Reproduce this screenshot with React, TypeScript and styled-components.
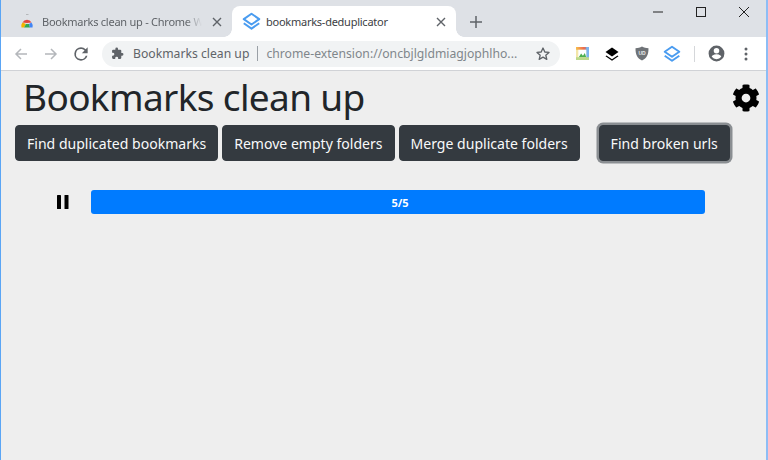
import React from 'react'
import styled, { createGlobalStyle } from 'styled-components'

const GlobalStyle = createGlobalStyle`
  html, body {
    margin: 0;
    padding: 0;
    height: 100%;
    overflow: hidden;
    background: #eeeeee;
  }
  * {
    box-sizing: border-box;
  }
`

const Window = styled.div`
  width: 768px;
  height: 460px;
  display: flex;
  flex-direction: column;
  overflow: hidden;
  border-left: 1px solid #5aa5f5;
  border-right: 2px solid #8dbdf5;
  background: #eeeeee;
  font-family: 'Noto Sans', 'Open Sans', sans-serif;
`

const TabStrip = styled.div`
  height: 37px;
  flex: none;
  display: flex;
  align-items: flex-end;
  padding-left: 7px;
  background: #dee1e6;
`

const Tab = styled.div<{ $active?: boolean }>`
  position: relative;
  width: 224px;
  height: 31px;
  flex: none;
  display: flex;
  align-items: center;
  gap: 7px;
  padding: 0 10px 0 11px;
  border-radius: 8px 8px 0 0;
  background: ${(p) => (p.$active ? '#ffffff' : 'transparent')};
  font-size: 11px;
  letter-spacing: -0.25px;
  color: ${(p) => (p.$active ? '#3c4043' : '#5f6368')};

  ${(p) =>
    p.$active &&
    `
    &::before,
    &::after {
      content: '';
      position: absolute;
      bottom: 0;
      width: 8px;
      height: 8px;
    }
    &::before {
      left: -8px;
      background: radial-gradient(circle at 0 0, transparent 7.5px, #ffffff 8px);
    }
    &::after {
      right: -8px;
      background: radial-gradient(circle at 100% 0, transparent 7.5px, #ffffff 8px);
    }
  `}
`

const TabIcon = styled.span`
  width: 16px;
  height: 16px;
  flex: none;
  display: flex;
  align-items: center;
  justify-content: center;
`

const TabTitle = styled.span<{ $faded?: boolean }>`
  flex: 1;
  min-width: 0;
  white-space: nowrap;
  ${(p) =>
    p.$faded &&
    `
    -webkit-mask-image: linear-gradient(90deg, #000 88%, transparent 98%);
    mask-image: linear-gradient(90deg, #000 88%, transparent 98%);
  `}
`

const NewTab = styled.div`
  width: 40px;
  height: 31px;
  flex: none;
  display: flex;
  align-items: center;
  justify-content: center;
  color: #5f6368;
`

const WindowControls = styled.div`
  margin-left: auto;
  align-self: flex-start;
  display: flex;
  height: 24px;
  padding-right: 1px;
`

const WindowButton = styled.div`
  width: 43px;
  display: flex;
  align-items: center;
  justify-content: center;
`

const Toolbar = styled.div`
  height: 34px;
  flex: none;
  display: flex;
  align-items: center;
  padding: 0 0 0 5px;
  background: #ffffff;
  border-bottom: 1px solid #d0d2d6;
`

const NavButton = styled.div`
  width: 30px;
  height: 24px;
  display: flex;
  align-items: center;
  justify-content: center;
  flex: none;
`

const Omnibox = styled.div`
  width: 458px;
  height: 26px;
  margin-left: 6px;
  flex: none;
  display: flex;
  align-items: center;
  padding: 0 9px 0 9px;
  border-radius: 13px;
  background: #f1f3f4;
  font-size: 12.2px;
  white-space: nowrap;
  color: #5f6368;
`

const OmniName = styled.span`
  margin-left: 9px;
  color: #5f6368;
`

const OmniDivider = styled.span`
  width: 1px;
  height: 15px;
  margin: 0 8px;
  background: #9aa0a6;
`

const OmniUrl = styled.span`
  flex: 1;
  color: #80868b;
`

const Extensions = styled.div`
  flex: 1;
  display: flex;
  align-items: center;
  gap: 10px;
  padding-left: 12px;
`

const ExtensionSlot = styled.div`
  width: 20px;
  height: 20px;
  display: flex;
  align-items: center;
  justify-content: center;
`

const ToolbarDivider = styled.span`
  width: 1px;
  height: 16px;
  margin: 0 1px 0 2px;
  background: #d5d7da;
`

const Page = styled.main`
  flex: 1;
  background: #eeeeee;
  padding: 0 0 0 14px;
`

const HeaderRow = styled.div`
  height: 54px;
  display: flex;
  align-items: center;
  justify-content: space-between;
  padding: 0 6px 0 8px;
`

const Title = styled.h1`
  margin: 0;
  padding-bottom: 2px;
  font-family: 'Noto Sans', 'Open Sans', sans-serif;
  font-size: 37px;
  line-height: 52px;
  letter-spacing: -0.65px;
  font-weight: 400;
  color: #212529;
`

const Actions = styled.div`
  display: flex;
  align-items: center;
  gap: 4px;
`

const ActionButton = styled.button<{ $focused?: boolean }>`
  height: 36px;
  padding: 0 11px;
  margin-left: ${(p) => (p.$focused ? '15px' : '0')};
  border: 1px solid #343a40;
  border-radius: 4px;
  background: #343a40;
  color: #f8f9fa;
  font-family: 'Noto Sans', 'Open Sans', sans-serif;
  font-size: 14.05px;
  box-shadow: ${(p) => (p.$focused ? '0 0 0 2.5px #8a8e92' : 'none')};
`

const ProgressRow = styled.div`
  display: flex;
  align-items: center;
  margin-top: 29px;
`

const PauseButton = styled.div`
  width: 76px;
  height: 24px;
  flex: none;
  display: flex;
  align-items: center;
  justify-content: center;
  padding-left: 19px;
`

const ProgressBar = styled.div`
  width: 614px;
  height: 24px;
  display: flex;
  align-items: center;
  justify-content: center;
  padding-left: 4px;
  border-radius: 3px;
  background: #007bff;
  color: #ffffff;
  font-size: 11px;
  font-weight: 700;
`

const TabClose = ({ color }: { color: string }) => (
  <svg width="10" height="10" viewBox="0 0 10 10" fill="none" stroke={color} strokeWidth="1.4">
    <path d="M1 1l8 8M9 1l-8 8" />
  </svg>
)

const LayersIcon = ({ size, stroke = '#4a9cf0' }: { size: number; stroke?: string }) => (
  <svg
    width={size}
    height={size}
    viewBox="0 0 16 16"
    fill="none"
    stroke={stroke}
    strokeWidth="1.7"
    strokeLinejoin="round"
    style={{ flex: 'none' }}
  >
    <path d="M8 1.5L14.5 6 8 10.5 1.5 6z" />
    <path d="M1.5 9.5L8 14l6.5-4.5" />
  </svg>
)

const ChromeStoreIcon = () => (
  <svg width="16" height="16" viewBox="0 0 16 16">
    <rect x="7" y="0" width="2.500" height="1" fill="#b5b7ba" />
    <path d="M3.500 8.500A5 5 0 0 1 12.500 8.500L8 9z" fill="#e2483d" />
    <path d="M2.500 13.500a5.500 5.500 0 0 1 1-5L7 10l-2 3.500z" fill="#f4b400" />
    <path d="M5 13.500L7 10h3l1 3.500z" fill="#34a853" />
    <path d="M11 13.500L10 10l2.500-1.500a5.500 5.500 0 0 1 1 5z" fill="#4285f4" />
  </svg>
)

const GearIcon = () => (
  <svg width="28" height="28" viewBox="0 0 512 512" fill="#000000">
    <path d="M487.4 315.7l-42.6-24.6c4.3-23.2 4.3-47 0-70.2l42.6-24.6c4.9-2.8 7.1-8.6 5.5-14-11.1-35.6-30-67.8-54.7-94.6-3.8-4.1-10-5.1-14.8-2.3L380.8 110c-17.9-15.4-38.5-27.3-60.8-35.1V25.8c0-5.6-3.9-10.5-9.4-11.7-36.7-8.2-74.3-7.8-109.2 0-5.5 1.2-9.4 6.1-9.4 11.7V75c-22.2 7.9-42.8 19.8-60.8 35.1L88.7 85.5c-4.9-2.8-11-1.9-14.8 2.3-24.7 26.7-43.6 58.9-54.7 94.6-1.7 5.4.6 11.2 5.5 14L67.3 221c-4.3 23.2-4.3 47 0 70.2l-42.6 24.6c-4.9 2.8-7.1 8.6-5.5 14 11.1 35.6 30 67.8 54.7 94.6 3.8 4.1 10 5.1 14.8 2.3l42.6-24.6c17.9 15.4 38.5 27.3 60.8 35.1v49.2c0 5.6 3.9 10.5 9.4 11.7 36.7 8.2 74.3 7.8 109.2 0 5.5-1.2 9.4-6.1 9.4-11.7v-49.2c22.2-7.9 42.8-19.8 60.8-35.1l42.6 24.6c4.9 2.8 11 1.9 14.8-2.3 24.7-26.7 43.6-58.9 54.7-94.6 1.5-5.5-.7-11.3-5.6-14.1zM256 336c-44.1 0-80-35.9-80-80s35.9-80 80-80 80 35.9 80 80-35.9 80-80 80z" />
  </svg>
)

const App = () => {
  return (
    <Window>
      <GlobalStyle />
      <TabStrip>
        <Tab>
          <TabIcon>
            <ChromeStoreIcon />
          </TabIcon>
          <TabTitle $faded>Bookmarks clean up - Chrome W</TabTitle>
          <TabClose color="#5f6368" />
        </Tab>
        <Tab $active>
          <TabIcon>
            <LayersIcon size={19} />
          </TabIcon>
          <TabTitle>bookmarks-deduplicator</TabTitle>
          <TabClose color="#5f6368" />
        </Tab>
        <NewTab>
          <svg width="12" height="12" viewBox="0 0 12 12" stroke="#5f6368" strokeWidth="1.5">
            <path d="M6 0v12M0 6h12" />
          </svg>
        </NewTab>
        <WindowControls>
          <WindowButton>
            <svg width="10" height="2" viewBox="0 0 10 2" stroke="#222" strokeWidth="1">
              <path d="M0 1h10" />
            </svg>
          </WindowButton>
          <WindowButton>
            <svg width="10" height="10" viewBox="0 0 10 10" fill="none" stroke="#222" strokeWidth="1">
              <rect x="0.5" y="0.5" width="9" height="9" />
            </svg>
          </WindowButton>
          <WindowButton>
            <svg width="10" height="10" viewBox="0 0 10 10" fill="none" stroke="#222" strokeWidth="1">
              <path d="M0 0l10 10M10 0L0 10" />
            </svg>
          </WindowButton>
        </WindowControls>
      </TabStrip>
      <Toolbar>
        <NavButton>
          <svg width="14" height="14" viewBox="0 0 14 14" fill="none" stroke="#b4b7bb" strokeWidth="1.5">
            <path d="M13 7H2M7 2L2 7l5 5" />
          </svg>
        </NavButton>
        <NavButton>
          <svg width="14" height="14" viewBox="0 0 14 14" fill="none" stroke="#b4b7bb" strokeWidth="1.5">
            <path d="M1 7h11M7 2l5 5-5 5" />
          </svg>
        </NavButton>
        <NavButton>
          <svg width="20" height="20" viewBox="0 0 24 24" fill="#5f6368">
            <path d="M17.65 6.35A7.96 7.96 0 0 0 12 4a8 8 0 1 0 7.73 10h-2.08A6 6 0 1 1 12 6c1.66 0 3.14.69 4.22 1.78L13 11h7V4l-2.35 2.35z" />
          </svg>
        </NavButton>
        <Omnibox>
          <svg width="13" height="13" viewBox="0 0 24 24" fill="#5f6368">
            <path d="M20.5 11H19V7a2 2 0 0 0-2-2h-4V3.5a2.5 2.5 0 0 0-5 0V5H4a2 2 0 0 0-2 2v3.8h1.5a2.7 2.7 0 0 1 0 5.4H2V20a2 2 0 0 0 2 2h3.8v-1.5a2.7 2.7 0 0 1 5.4 0V22H17a2 2 0 0 0 2-2v-4h1.5a2.5 2.5 0 0 0 0-5z" />
          </svg>
          <OmniName>Bookmarks clean up</OmniName>
          <OmniDivider />
          <OmniUrl>chrome-extension://oncbjlgldmiagjophlho...</OmniUrl>
          <svg width="16" height="16" viewBox="0 0 24 24" fill="none" stroke="#5f6368" strokeWidth="2" strokeLinejoin="round">
            <path d="M12 3l2.7 6 6.3.6-4.8 4.2 1.5 6.2-5.7-3.3L6.300 20l1.5-6.200L3 9.600 9.300 9z" />
          </svg>
        </Omnibox>
        <Extensions>
          <ExtensionSlot>
            <svg width="13" height="13" viewBox="0 0 14 14">
              <defs>
                <linearGradient id="extTop" x1="0" y1="0" x2="1" y2="0">
                  <stop offset="0" stopColor="#f6c04d" />
                  <stop offset="0.6" stopColor="#ef6a4c" />
                  <stop offset="1" stopColor="#5aa0ee" />
                </linearGradient>
              </defs>
              <rect x="0" y="0" width="14" height="14" fill="#f3e6a8" />
              <rect x="0" y="0" width="14" height="3" fill="url(#extTop)" />
              <rect x="11" y="0" width="3" height="14" fill="#7db4ee" />
              <rect x="2.500" y="3" width="8.500" height="8" fill="#ffffff" />
              <path d="M3 11l2.500-4 2 2.500L9.500 6.500 11 11z" fill="#4caf50" />
              <rect x="0" y="11" width="14" height="3" fill="#bcd98a" />
            </svg>
          </ExtensionSlot>
          <ExtensionSlot>
            <svg width="14" height="14" viewBox="0 0 14 14" fill="#000000">
              <path d="M7 0.500L13.500 5 7 9.500 0.500 5z" />
              <path d="M1.500 8.500L7 12.300l5.500-3.800 1 .7L7 13.800.500 9.200z" />
            </svg>
          </ExtensionSlot>
          <ExtensionSlot>
            <svg width="14" height="15" viewBox="0 0 14 15">
              <path d="M7 0.500c2 1.200 4 1.700 6.500 1.700 0 6-1.500 10-6.500 12.300C2 12.200.500 8.200.500 2.200 3 2.200 5 1.700 7 .500z" fill="#6f7377" />
              <text x="7" y="8.800" fontSize="5" fontWeight="700" textAnchor="middle" fill="#e8e8e8" fontFamily="'Liberation Sans', sans-serif">
                UD
              </text>
            </svg>
          </ExtensionSlot>
          <ExtensionSlot>
            <LayersIcon size={18} />
          </ExtensionSlot>
          <ToolbarDivider />
          <ExtensionSlot>
            <svg width="19" height="19" viewBox="0 0 24 24" fill="#5f6368">
              <path d="M12 2a10 10 0 1 0 0 20 10 10 0 0 0 0-20zm0 3a3.500 3.500 0 1 1 0 7 3.500 3.500 0 0 1 0-7zm0 14.200a7.500 7.500 0 0 1-6-3.200c.03-2 4-3.100 6-3.100s5.970 1.100 6 3.100a7.500 7.500 0 0 1-6 3.200z" />
            </svg>
          </ExtensionSlot>
          <ExtensionSlot>
            <svg width="4" height="14" viewBox="0 0 4 14" fill="#5f6368">
              <circle cx="2" cy="2" r="1.500" />
              <circle cx="2" cy="7" r="1.500" />
              <circle cx="2" cy="12" r="1.500" />
            </svg>
          </ExtensionSlot>
        </Extensions>
      </Toolbar>
      <Page>
        <HeaderRow>
          <Title>Bookmarks clean up</Title>
          <GearIcon />
        </HeaderRow>
        <Actions>
          <ActionButton>Find duplicated bookmarks</ActionButton>
          <ActionButton>Remove empty folders</ActionButton>
          <ActionButton>Merge duplicate folders</ActionButton>
          <ActionButton $focused>Find broken urls</ActionButton>
        </Actions>
        <ProgressRow>
          <PauseButton>
            <svg width="12" height="14" viewBox="0 0 12 14" fill="#000000">
              <rect x="0" y="0" width="4" height="14" rx="0.6" />
              <rect x="7.500" y="0" width="4" height="14" rx="0.6" />
            </svg>
          </PauseButton>
          <ProgressBar>5/5</ProgressBar>
        </ProgressRow>
      </Page>
    </Window>
  )
}

export default App
